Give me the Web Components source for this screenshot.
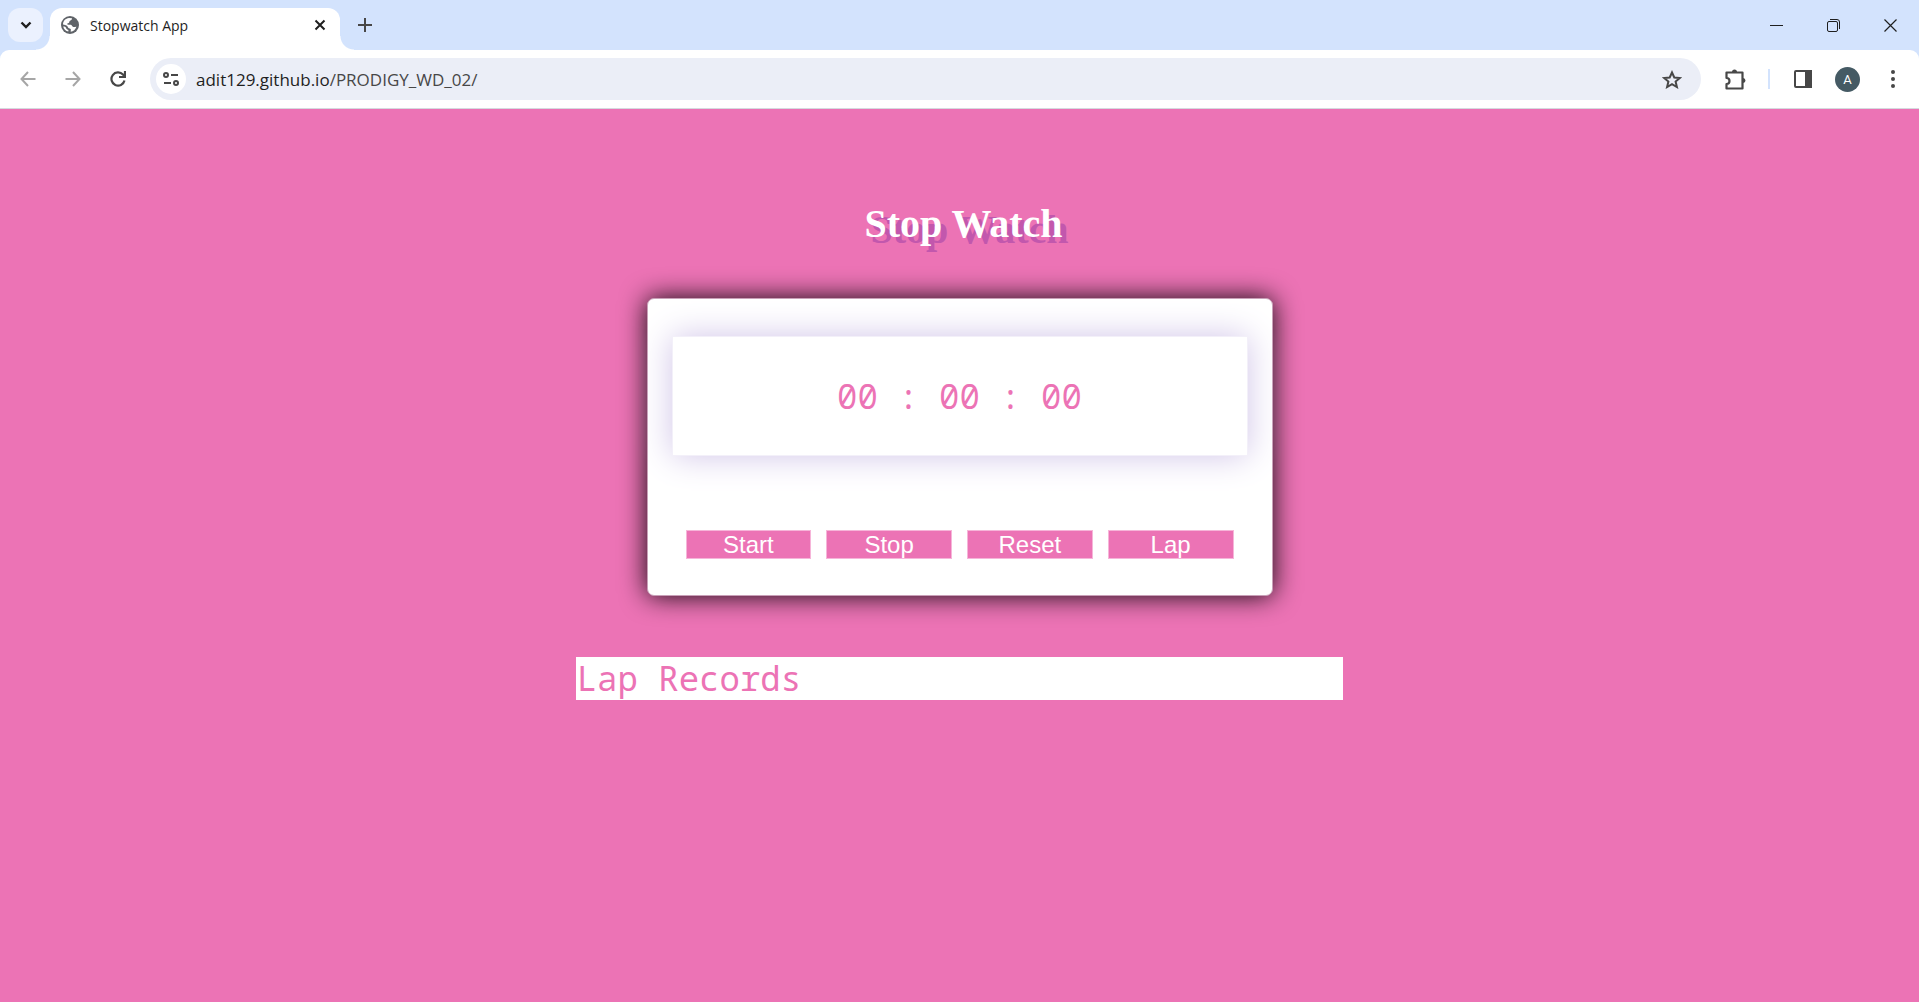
<!DOCTYPE html>
<html lang="en">
<head>
<meta charset="utf-8">
<title>Stopwatch App</title>
<style>
  html, body { margin: 0; height: 100%; }
  body { display: flex; flex-direction: column; background: #ec73b5; }
  stopwatch-page { flex: 1; }
</style>
</head>
<body>
<tab-strip><browser-tab>Stopwatch App</browser-tab></tab-strip>
<browser-toolbar></browser-toolbar>
<stopwatch-page></stopwatch-page>
<script>
function define(name, html) {
  const template = document.createElement('template');
  template.innerHTML = '<style>*{box-sizing:border-box}button{font:inherit;color:inherit;border:0;padding:0;background:none;display:grid;place-items:center}svg{display:block;fill:none;stroke:currentColor}</style>' + html;
  customElements.define(name, class extends HTMLElement {
    constructor() {
      super();
      this.attachShadow({ mode: 'open' }).append(template.content.cloneNode(true));
    }
  });
}

define('browser-tab', `
<style>
  :host { display: flex; align-items: center; width: 290px; height: 42px; padding: 0 10px 0 11px; margin-top: 8px; border-radius: 12px 12px 0 0; background: #fff; color: #1f1f1f; font: 14px "Open Sans", sans-serif; position: relative; box-sizing: border-box; }
  :host::before, :host::after { content: ""; position: absolute; bottom: 0; width: 14px; height: 14px; }
  :host::before { right: 100%; background: radial-gradient(circle at 0 0, transparent 13px, #fff 14px); }
  :host::after { left: 100%; background: radial-gradient(circle at 100% 0, transparent 13px, #fff 14px); }
  .label { flex: 1; padding-left: 11px; padding-bottom: 8px; white-space: nowrap; }
  svg, button { margin-bottom: 8px; }
  button svg { margin: 0; }
</style>
<svg width="18" height="18" viewBox="0 0 18 18"><circle cx="9" cy="9" r="9" fill="#5f6368" stroke="none"/><path fill="#fff" stroke="none" d="M2 8.500C2 5 4.500 2.300 8 2l3 .3C11.300 4 9.500 4.300 8.700 5c-.7.700 0 1.500-1 2-1 .4-1.700.5-1.500 1.200.3.700 2.300.3 3.600.5 1.500.3 1.200 2 2.600 2.200 1 .2 1.900-.3 3-.2-.8 2.500-3 4.800-5.700 5.100-.1-1.300.7-2.300-.4-3-.9-.5-2-.2-2.200-1.300C6.800 10 5 8.900 2 8.500zM2.200 10.500c1.300 0 2.500.2 2.800 1.300.3 1.100.8 1.800 2 2 .6.200.5 1 .3 1.800-2.600-.5-4.700-2.500-5.100-5.100z"/></svg>
<span class="label"><slot></slot></span>
<button aria-label="Close tab"><svg width="20" height="20" viewBox="0 0 20 20" stroke-width="2"><path d="M5.500 5.500l9 9m0-9l-9 9"/></svg></button>
`);

define('tab-strip', `
<style>
  :host { display: flex; height: 50px; background: #d3e3fd; color: #1f1f1f; }
  .search { width: 35px; height: 34px; margin: 8px 7px 0 8px; border-radius: 12px; background: #ebf1fe; }
  .new { width: 50px; height: 50px; color: #474747; }
  .windows { display: flex; margin-left: auto; }
  .windows button { width: 57px; height: 50px; }
</style>
<button class="search" aria-label="Search tabs"><svg width="12" height="10" viewBox="0 0 12 10" stroke-width="2.400"><path d="M1.500 2.500L6 7l4.500-4.500"/></svg></button>
<slot></slot>
<button class="new" aria-label="New tab"><svg width="14" height="14" viewBox="0 0 14 14" stroke-width="2"><path d="M7 0v14M0 7h14"/></svg></button>
<div class="windows">
  <button aria-label="Minimize"><svg width="13" height="13" viewBox="0 0 13 13"><path d="M0 6.500h13"/></svg></button>
  <button aria-label="Restore"><svg width="13" height="13" viewBox="0 0 13 13"><rect x=".5" y="2.500" width="10" height="10" rx="1.500"/><path d="M3 .5h7a2.500 2.500 0 0 1 2.500 2.500v7"/></svg></button>
  <button aria-label="Close"><svg width="13" height="13" viewBox="0 0 13 13" stroke-width="1.200"><path d="M.5.5l12 12m0-12l-12 12"/></svg></button>
</div>
`);

define('browser-toolbar', `
<style>
  :host { display: block; background: #d3e3fd; color: #474747; }
  nav { display: flex; align-items: center; height: 59px; background: #fff; border-bottom: 1px solid #d5dadf; border-radius: 9px 9px 0 0; padding: 0 14px 0 5px; }
  .nav { width: 45px; height: 42px; }
  .off { color: #a6a6a6; }
  .address { display: flex; align-items: center; flex: 1; height: 42px; margin: 0 12px 0 10px; padding: 0 19px 0 6px; border-radius: 21px; background: #ebeef7; font: 17px "Open Sans", sans-serif; }
  .site { width: 30px; height: 30px; border-radius: 50%; background: #fff; }
  .url { flex: 1; padding-left: 10px; color: #474747; }
  b { font-weight: 400; color: #1f1f1f; }
  .tool { width: 45px; height: 40px; }
  i { width: 2px; height: 20px; margin: 0 10px; background: #d3e3fd; }
  .avatar { width: 25px; height: 25px; margin: 0 10px; border-radius: 50%; background: #455a64; color: #fff; font: 13px Roboto, sans-serif; }
  .menu { width: 25px; margin-left: 10px; }
</style>
<nav>
  <button class="nav off" aria-label="Back"><svg width="16" height="16" viewBox="0 0 16 16" stroke-width="2"><path d="M15.500 8H2M8 1L1.500 8 8 15"/></svg></button>
  <button class="nav off" aria-label="Forward"><svg width="16" height="16" viewBox="0 0 16 16" stroke-width="2"><path d="M.5 8H14M8 1l6.500 7L8 15"/></svg></button>
  <button class="nav" aria-label="Reload"><svg width="16" height="16" viewBox="0 0 16 16" stroke-width="2.200"><path d="M14.500 9.500A6.600 6.600 0 1 1 13 3.600L15 6M15 0v6H9"/></svg></button>
  <div class="address">
    <button class="site" aria-label="Site information"><svg width="16" height="14" viewBox="0 0 16 14" stroke-width="2"><circle cx="3" cy="3" r="2"/><path d="M8 3h7M1 11h7"/><circle cx="13" cy="11" r="2"/></svg></button>
    <span class="url"><b>adit129.github.io</b>/PRODIGY_WD_02/</span>
    <button aria-label="Bookmark this tab"><svg width="20" height="19" viewBox="0 0 20 19" stroke-width="2"><path d="M10 2.500l2.300 5 5.500.5-4.200 3.600 1.300 5.400-4.900-2.900L5.100 17l1.300-5.400L2.200 8l5.500-.5z"/></svg></button>
  </div>
  <button class="tool" aria-label="Extensions"><svg width="21" height="21" viewBox="0 0 21 21" stroke-width="2.200"><path d="M1.500 3.500h16v16h-16v-4.500a3 3 0 0 0 0-6z" stroke-linejoin="round"/><path d="M7 3a2.500 2.500 0 0 1 5 0zM18 9a2.500 2.500 0 0 1 0 5z" fill="currentColor" stroke="none"/></svg></button>
  <i></i>
  <button class="tool" aria-label="Side panel"><svg width="18" height="18" viewBox="0 0 18 18" stroke-width="2"><rect x="1" y="1" width="16" height="16" rx="1"/><path d="M12 1h5v16h-5z" fill="currentColor"/></svg></button>
  <button class="avatar" aria-label="Profile">A</button>
  <button class="tool menu" aria-label="Menu"><svg width="4" height="18" viewBox="0 0 4 18" style="fill:currentColor;stroke:none"><circle cx="2" cy="2" r="2"/><circle cx="2" cy="9" r="2"/><circle cx="2" cy="16" r="2"/></svg></button>
</nav>
`);

define('stop-button', `
<style>
  :host { display: block; flex: 1; }
  button { width: 100%; height: 29px; border: 1px solid #f6b5d9; background: #ec73b5; color: #fff; font: 24px/27px "Liberation Sans", Arial, sans-serif; }
</style>
<button><slot></slot></button>
`);

define('stopwatch-card', `
<style>
  :host { display: block; box-sizing: border-box; width: 626px; border: 1px solid #c9a0b8; border-radius: 7px; padding: 37px 24px 36px; background: #fff; box-shadow: 0 0 27px rgba(0,0,0,.95); }
  .time { display: grid; place-items: center; height: 120px; border: 1px solid #f3f0f9; background: #fff; box-shadow: 0 0 32px #d0c4e8; }
  .buttons { display: flex; gap: 15px; padding: 74px 14px 0; }
</style>
<div class="time"><slot></slot></div>
<div class="buttons"><stop-button>Start</stop-button><stop-button>Stop</stop-button><stop-button>Reset</stop-button><stop-button>Lap</stop-button></div>
`);

define('lap-records', `
<style>
  :host { display: block; width: 40%; margin-top: 61px; padding: 0 1px; box-sizing: border-box; background: #fff; line-height: 43px; }
</style>
<slot></slot>
`);

define('stopwatch-page', `
<style>
  :host { display: flex; flex-direction: column; align-items: center; background: #ec73b5; color: #ec73b5; font: 34px Consolas, "Noto Sans Mono", "DejaVu Sans Mono", monospace; }
  h1 { margin: 92px 0 51px; padding-left: 8px; color: #fff; font: bold 40px/46px "Liberation Serif", "Times New Roman", serif; text-shadow: 6px 6px #c257ad; }
</style>
<h1>Stop Watch</h1>
<stopwatch-card>00 : 00 : 00</stopwatch-card>
<lap-records>Lap Records</lap-records>
`);
</script>
</body>
</html>
